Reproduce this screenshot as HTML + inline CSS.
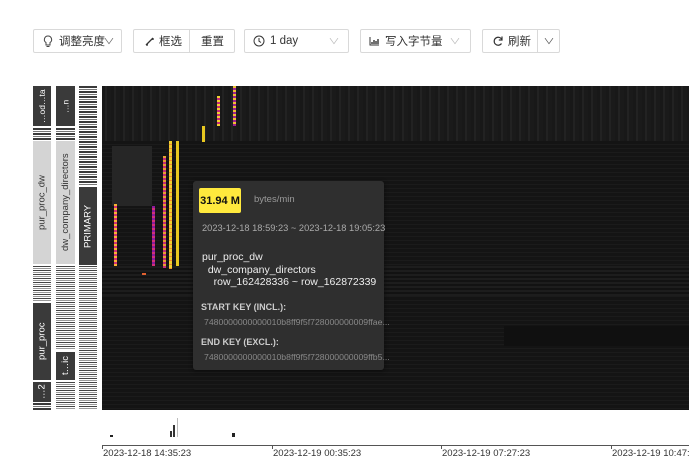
<!DOCTYPE html>
<html><head><meta charset="utf-8"><style>
*{box-sizing:border-box;margin:0;padding:0}
body{width:689px;height:473px;background:#fff;font-family:"Liberation Sans","Noto Sans CJK SC",sans-serif;position:relative;overflow:hidden;font-size:12px;color:#333}
.btn{position:absolute;top:29px;height:24px;border:1px solid #d9d9d9;border-radius:2px;background:#fff;display:flex;align-items:center;font-size:11.5px;color:#333}
.abs{position:absolute}
.v{position:absolute;writing-mode:vertical-rl;transform:rotate(180deg);font-size:9.5px;display:flex;align-items:center;justify-content:center}
.str{background:repeating-linear-gradient(180deg,#3a3a3a 0 2px,#fff 2px 3px,#777 3px 4px,#fff 4px 5px)}
.str2{background:repeating-linear-gradient(180deg,#444 0 1px,#fff 1px 2px,#999 2px 3px,#fff 3px 4px)}
.tt{color:#fff}
.chev{position:absolute;font-size:8px;transform:scaleX(1.4)}
</style></head><body>
<div class="btn" style="left:33px;width:89px"><svg class="abs" style="left:9px;top:5px" width="10" height="13" viewBox="0 0 10 13"><path d="M5 1a3.6 3.6 0 0 0-2 6.6V10h4V7.6A3.6 3.6 0 0 0 5 1zM3.5 11.5h3" fill="none" stroke="#444" stroke-width="1"/></svg><span class="abs" style="left:25px">调整亮度</span><span class="chev" style="left:71px;color:#666">∨</span></div>
<div class="btn" style="left:133px;width:102px"><svg class="abs" style="left:11px;top:7px" width="9" height="9"><path d="M1 8L8 1M1 8h2M8 1v2" stroke="#333" stroke-width="1.3" fill="none"/></svg><span class="abs" style="left:25px">框选</span><span class="abs" style="left:55px;top:-1px;width:1px;height:24px;background:#d9d9d9"></span><span class="abs" style="left:67px">重置</span></div>
<div class="btn" style="left:244px;width:105px"><svg class="abs" style="left:8px;top:5px" width="12" height="12"><circle cx="6" cy="6" r="5" fill="none" stroke="#333"/><path d="M6 3v3.2l2 1.3" fill="none" stroke="#333"/></svg><span class="abs" style="left:25px">1 day</span><span class="chev" style="left:85px;color:#bbb">∨</span></div>
<div class="btn" style="left:360px;width:111px"><svg class="abs" style="left:8px;top:7px" width="10" height="9"><path d="M1 0v8h9" stroke="#333" fill="none"/><path d="M3 7V5M5 7V3M7 7V4M9 7V2" stroke="#333" stroke-width="1.4"/></svg><span class="abs" style="left:24px">写入字节量</span><span class="chev" style="left:90px;color:#bbb">∨</span></div>
<div class="btn" style="left:482px;width:78px"><svg class="abs" style="left:9px;top:5px" width="12" height="12"><path d="M10 5A4 4 0 1 0 9.5 8.5M10 1.5V5H6.8" fill="none" stroke="#333" stroke-width="1.2"/></svg><span class="abs" style="left:25px">刷新</span><span class="abs" style="left:54px;top:-1px;width:1px;height:24px;background:#d9d9d9"></span><span class="chev" style="left:62px;color:#555">∨</span></div>

<div class="abs" style="left:33px;top:86px;width:18px;height:324px" >
 <div class="v tt" style="left:0;top:0;width:18px;height:40px;background:#3a3a3a;font-size:8.5px">…od…ta</div>
 <div class="abs str" style="left:0;top:42px;width:18px;height:12px"></div>
 <div class="v" style="left:0;top:55px;width:18px;height:123px;background:#d4d4d4;color:#333">pur_proc_dw</div>
 <div class="abs str2" style="left:0;top:180px;width:18px;height:36px"></div>
 <div class="v tt" style="left:0;top:217px;width:18px;height:77px;background:#3a3a3a">pur_proc</div>
 <div class="abs" style="left:0;top:294px;width:18px;height:2px;background:#fff"></div>
 <div class="v tt" style="left:0;top:296px;width:18px;height:20px;background:#3a3a3a">…2</div>
 <div class="abs str" style="left:0;top:317px;width:18px;height:7px"></div>
</div>
<div class="abs" style="left:56px;top:86px;width:19px;height:324px">
 <div class="v tt" style="left:0;top:0;width:19px;height:40px;background:#3a3a3a;font-size:8.5px">…n</div>
 <div class="abs str" style="left:0;top:42px;width:19px;height:12px"></div>
 <div class="v" style="left:0;top:55px;width:19px;height:123px;background:#d4d4d4;color:#333">dw_company_directors</div>
 <div class="abs str2" style="left:0;top:180px;width:19px;height:84px"></div>
 <div class="v tt" style="left:0;top:266px;width:19px;height:28px;background:#3a3a3a">t…ic</div>
 <div class="abs str2" style="left:0;top:296px;width:19px;height:28px"></div>
</div>
<div class="abs" style="left:79px;top:86px;width:18px;height:324px">
 <div class="abs str" style="left:0;top:0;width:18px;height:100px"></div>
 <div class="v tt" style="left:0;top:101px;width:18px;height:78px;background:#3a3a3a">PRIMARY</div>
 <div class="abs str2" style="left:0;top:180px;width:18px;height:144px"></div>
</div>

<div class="abs" style="left:102px;top:86px;width:587px;height:324px;background:#151515;overflow:hidden">
 <div class="abs" style="left:0;top:0;width:587px;height:55px;background:repeating-linear-gradient(90deg,#181818 0 3px,#222 3px 5px,#1a1a1a 5px 9px)"></div>
 <div class="abs" style="left:0;top:55px;width:587px;height:270px;background:repeating-linear-gradient(180deg,#141414 0 3px,#1b1b1b 3px 4px)"></div>
 <div class="abs" style="left:10px;top:60px;width:40px;height:60px;background:#262626"></div>
 <div class="abs" style="left:0;top:180px;width:587px;height:30px;background:repeating-linear-gradient(180deg,#1d1d1d 0 2px,#121212 2px 4px)"></div>
 <div class="abs" style="left:402px;top:240px;width:185px;height:20px;background:#101010"></div>
 <div class="abs" style="left:12px;top:118px;width:3px;height:62px;background:repeating-linear-gradient(180deg,#f9b233 0 2px,#d1307a 2px 4px)"></div>
 <div class="abs" style="left:50px;top:120px;width:3px;height:60px;background:repeating-linear-gradient(180deg,#8b1a9c 0 2px,#d1307a 2px 4px)"></div>
 <div class="abs" style="left:61px;top:70px;width:3px;height:112px;background:repeating-linear-gradient(180deg,#e8a030 0 2px,#c42a7a 2px 4px)"></div>
 <div class="abs" style="left:67px;top:55px;width:3px;height:128px;background:repeating-linear-gradient(180deg,#f0d030 0 3px,#f28a30 3px 4px)"></div>
 <div class="abs" style="left:74px;top:55px;width:3px;height:125px;background:#e8c820"></div>
 <div class="abs" style="left:115px;top:10px;width:3px;height:30px;background:repeating-linear-gradient(180deg,#f0d030 0 2px,#c42a7a 2px 4px)"></div>
 <div class="abs" style="left:131px;top:0;width:3px;height:40px;background:repeating-linear-gradient(180deg,#f0c030 0 2px,#a02090 2px 4px)"></div>
 <div class="abs" style="left:100px;top:40px;width:3px;height:16px;background:#e8c820"></div>
 <div class="abs" style="left:40px;top:187px;width:4px;height:2px;background:#e06030"></div>
</div>

<div class="abs" style="left:193px;top:181px;width:191px;height:189px;background:#2f2f2f;border-radius:3px;box-shadow:0 1px 4px rgba(0,0,0,.5)">
 <div class="abs" style="left:6px;top:7px;width:42px;height:25px;background:#ffe93d;border-radius:2px;color:#111;font-size:11px;font-weight:bold;display:flex;align-items:center;justify-content:center">31.94 M</div>
 <div class="abs" style="left:61px;top:13px;color:#999;font-size:9.5px">bytes/min</div>
 <div class="abs" style="left:9px;top:42px;color:#aaa;font-size:9.3px;white-space:nowrap">2023-12-18 18:59:23 ~ 2023-12-18 19:05:23</div>
 <div class="abs" style="left:9px;top:70px;color:#eee;font-size:10.5px;line-height:12.5px;white-space:pre">pur_proc_dw
  dw_company_directors
    row_162428336 ~ row_162872339</div>
 <div class="abs" style="left:8px;top:121px;color:#ccc;font-size:9px;font-weight:bold">START KEY (INCL.):</div>
 <div class="abs" style="left:11px;top:136px;color:#888;font-size:8.7px;white-space:nowrap">7480000000000010b8ff9f5f728000000009ffae...</div>
 <div class="abs" style="left:8px;top:156px;color:#ccc;font-size:9px;font-weight:bold">END KEY (EXCL.):</div>
 <div class="abs" style="left:11px;top:171px;color:#888;font-size:8.7px;white-space:nowrap">7480000000000010b8ff9f5f728000000009ffb5...</div>
</div>

<div class="abs" style="left:110px;top:435px;width:3px;height:2px;background:#222"></div>
<div class="abs" style="left:170px;top:431px;width:2px;height:6px;background:#333"></div>
<div class="abs" style="left:173px;top:425px;width:2px;height:12px;background:#333"></div>
<div class="abs" style="left:177px;top:418px;width:1px;height:19px;background:#bbb"></div>
<div class="abs" style="left:232px;top:433px;width:3px;height:4px;background:#222"></div>
<div class="abs" style="left:102px;top:445px;width:587px;height:1px;background:#555"></div>
<div class="abs" style="left:102px;top:445px;width:1px;height:4px;background:#555"></div>
<div class="abs" style="left:272px;top:445px;width:1px;height:4px;background:#555"></div>
<div class="abs" style="left:441px;top:445px;width:1px;height:4px;background:#555"></div>
<div class="abs" style="left:611px;top:445px;width:1px;height:4px;background:#555"></div>
<div class="abs" style="left:103px;top:448px;font-size:9.5px;color:#333;white-space:nowrap">2023-12-18 14:35:23</div>
<div class="abs" style="left:273px;top:448px;font-size:9.5px;color:#333;white-space:nowrap">2023-12-19 00:35:23</div>
<div class="abs" style="left:442px;top:448px;font-size:9.5px;color:#333;white-space:nowrap">2023-12-19 07:27:23</div>
<div class="abs" style="left:612px;top:448px;font-size:9.5px;color:#333;white-space:nowrap">2023-12-19 10:47:23</div>
</body></html>
